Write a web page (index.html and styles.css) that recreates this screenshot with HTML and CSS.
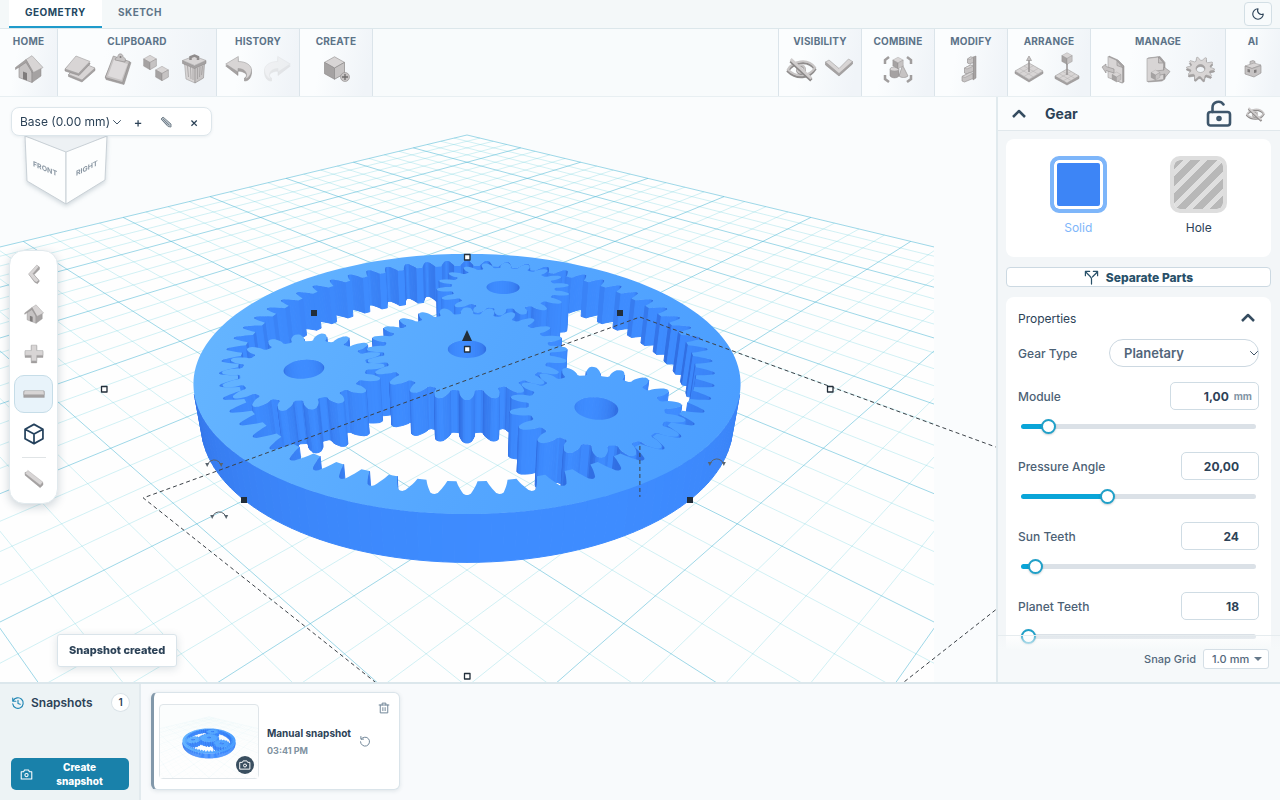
FILE: index.html
```html
<!DOCTYPE html>
<html lang="en">
<head>
<meta charset="utf-8">
<meta name="viewport" content="width=device-width, initial-scale=1">
<title>Gear – Geometry</title>
<link rel="stylesheet" href="styles.css">
</head>
<body>
<svg class="defs" aria-hidden="true">
  <symbol id="cube" viewBox="0 0 20 20">
    <path class="lt" d="M10 1 18 5.5 10 10 2 5.5Z"/><path class="dk" d="M2 5.5 10 10V19L2 14.5Z"/><path class="md" d="M18 5.5 10 10V19l8-4.5Z"/>
  </symbol>
  <symbol id="house" viewBox="0 0 32 32">
    <path class="md" d="M6 14 13 8l6 10v11.500L6 24.500Z"/><path class="dk" d="M19 18l9-4v9l-9 6.500Z"/>
    <path class="hole" d="M10 18.500l4 1.500v7.500l-4-1.500Z"/>
    <path class="lt" d="M13 6.500 19 2.700 30 14.500 19.500 20Z"/><path class="dk" d="M13 6.500 2.500 14.500v2L13 9.500l6.500 10.500.500-1.500Z"/>
  </symbol>
  <symbol id="eyeoff" viewBox="0 0 34 32">
    <path class="ring-d" d="M3 18.500c5-9 21-13 29-2-6 10-20 11-29 2Z"/><path class="ring-l" d="M3 16.500c5-9 21-13 29-2-6 10-20 11-29 2Z"/>
    <circle class="ring-d" cx="17" cy="17" r="4"/><circle class="ring-l" cx="17" cy="16" r="4"/>
    <path class="bar-d" d="M6 7.500 28 28"/><path class="bar-l" d="M6 5.500 28 26"/>
  </symbol>
  <symbol id="undo" viewBox="0 0 32 32">
    <path class="dk" d="M2.700 13 15 5.500v5c9 0 14 4 13.500 9.500-.5 5-3 8-7 8v-3c3-.5 4-6-6.500-7v4.500Z"/>
    <path class="lt" d="M2.700 11 15.300 3.500V8.500c8 0 13.500 4 13.200 9-.3 4-3 8-6.500 8.500 4-5.500-.5-10.500-7-10.500V19Z"/>
  </symbol>
  <symbol id="camera" viewBox="0 0 16 16"><path class="ln" d="M1.500 4.500h3l1-2h5l1 2h3v9h-13Z"/><circle class="ln" cx="8" cy="8.700" r="2"/></symbol>
</svg>

<header class="tabs">
  <nav class="tablist">
    <button class="tab active" type="button">GEOMETRY</button>
    <button class="tab" type="button">SKETCH</button>
  </nav>
  <button class="theme" type="button" aria-label="Dark theme"><svg viewBox="0 0 16 16"><path class="ln" d="M8 2a4.500 4.500 0 0 0 6 6 6 6 0 1 1-6-6Z"/></svg></button>
</header>

<section class="ribbon">
  <div class="group home"><h2>HOME</h2><div class="tools">
    <button type="button" aria-label="Home"><svg class="ic"><use href="#house"/></svg></button>
  </div></div>
  <div class="group"><h2>CLIPBOARD</h2><div class="tools">
    <button type="button" aria-label="Copy"><svg class="ic" viewBox="0 0 32 32"><path class="dk" d="M17 10 31 15.500v2L18 29 4.500 23.500v-2Z"/><path class="lt" d="M17 9 31 15 18 27 4.500 21.500Z"/><path class="dk" d="M12 5 26 10v1L15 22.500 1 18v-2Z"/><path class="lt" d="M12 3 26 8.500 14.500 20.500 1 16Z"/></svg></button>
    <button type="button" aria-label="Paste"><svg class="ic" viewBox="0 0 32 32"><path class="dk" d="M12 4 29 9.500 22 31.500 4 26.500 3.300 24Z"/><path class="md" d="M11.300 3 27.500 8.500 20.500 29.500 3.300 24.500Z"/><path class="pale" d="M12 6.500 25.500 11 19.500 27 6 23Z"/><path class="md" d="M13.500 5.500 16 3.500c0-4 5-3 5 0l2.500 2.500-.5 3-10-2Z"/><circle class="hole" cx="18.500" cy="4" r="1"/></svg></button>
    <button type="button" aria-label="Duplicate"><svg class="ic" viewBox="0 0 32 32"><use href="#cube" x="2" y="1" width="16" height="17"/><use href="#cube" x="14" y="12" width="16" height="17"/></svg></button>
    <button type="button" aria-label="Delete"><svg class="ic" viewBox="0 0 32 32"><path class="lt" d="M6.500 10 17 14v16L8 26Z"/><path class="md" d="M26.500 10 17 14v16l8.500-5Z"/><path class="rib" d="M9.500 13l1 11M12.500 14l.5 12M15 15v12M19.500 15v11M22 14l-.5 10M24.500 13l-1 9"/><path class="dk" d="M4.500 7.500 16.500 13 28 7.500v3L16.500 15.500 4.500 10.500Z"/><path class="lt" d="M4.500 7.500 16 3 28 7.500 16.500 12.500Z"/><path class="ring-d" d="M12.500 7V4l4-1.500L20 4v3"/></svg></button>
  </div></div>
  <div class="group"><h2>HISTORY</h2><div class="tools">
    <button type="button" aria-label="Undo"><svg class="ic"><use href="#undo"/></svg></button>
    <button type="button" aria-label="Redo" disabled><svg class="ic flip"><use href="#undo"/></svg></button>
  </div></div>
  <div class="group single"><h2>CREATE</h2><div class="tools">
    <button type="button" aria-label="Create"><svg class="ic" viewBox="0 0 32 32"><use href="#cube" x="2" y="2" width="25" height="26"/><circle class="md" cx="25" cy="24" r="4.500"/><path class="rib dark" d="M25 21v6M22 24h6"/></svg></button>
  </div></div>
  <div class="spacer"></div>
  <div class="group first"><h2>VISIBILITY</h2><div class="tools">
    <button type="button" aria-label="Hide"><svg class="ic"><use href="#eyeoff"/></svg></button>
    <button type="button" aria-label="More"><svg class="ic" viewBox="0 0 32 32"><path class="dk" d="M2.500 9v3L16 23 29.500 11V8.500L16 18Z"/><path class="lt" d="M2.500 9 6 7l10 8.500L25.500 6l4 2.500L16 20.500Z"/></svg></button>
  </div></div>
  <div class="group single"><h2>COMBINE</h2><div class="tools">
    <button type="button" aria-label="Combine"><svg class="ic" viewBox="0 0 32 32"><path class="bracket" d="M3 11V7l4-3M25 4l4 3v4M3 22v4l4 3M25 29l4-3v-4"/><path class="md" d="M20.500 12l5.500 11c-2 2-7 2-9 0Z"/><path class="dk" d="M8 16v7c2 2.500 7 2.500 9 0v-7Z"/><ellipse class="lt" cx="12.500" cy="16" rx="4.500" ry="2"/><use href="#cube" x="9.500" y="3.500" width="13" height="13"/></svg></button>
  </div></div>
  <div class="group single"><h2>MODIFY</h2><div class="tools">
    <button type="button" aria-label="Modify"><svg class="ic" viewBox="0 0 32 32"><path class="dk" d="M18 4l3-1v22l-3 2Z"/><path class="md" d="M12.500 6l3-2 3 .500v5l-4 1.500-2-1Z"/><path class="lt" d="M12.500 6l3-2 3 .500-3.500 2Z"/><path class="md" d="M9.500 15l6-3 3 1v5l-6.500 3-2.500-1Z"/><path class="lt" d="M9.500 15l6-3 3 1-6.500 3Z"/><path class="md" d="M7 23.500l8-4 3 1v5l-8.500 3.500-2.500-1Z"/><path class="lt" d="M7 23.500l8-4 3 1-8 4Z"/></svg></button>
  </div></div>
  <div class="group"><h2>ARRANGE</h2><div class="tools">
    <button type="button" aria-label="Move to plane"><svg class="ic" viewBox="0 0 32 32"><path class="dk" d="M1 18.500 15 27l14-8.500v2L15 29 1 20.500Z"/><path class="lt" d="M1 18 15 10l14 8-14 8.500Z"/><path class="rib thin" d="M5.500 20.500 19.500 12.500M10 23.500l14-8M5.500 15.500l14 8.500M10 13l14 8"/><path class="stem" d="M15 19V6"/><path class="md" d="M12.500 7.500 15 3l2.500 4.500Z"/></svg></button>
    <button type="button" aria-label="Drop"><svg class="ic" viewBox="0 0 32 32"><path class="dk" d="M3 23 15 30l12-7v2.500L15 32 3 25.500Z"/><path class="lt" d="M3 23 15 16l12 7-12 7Z"/><path class="rib thin" d="M7 25.500 19 18.500M11 28l12-7M7 20.500l12 7M11 18.500l12 7"/><path class="stem" d="M15 22V9"/><use href="#cube" x="8.500" y="-1" width="13" height="13"/></svg></button>
  </div></div>
  <div class="group manage"><h2>MANAGE</h2><div class="tools">
    <button type="button" aria-label="Import"><svg class="ic" viewBox="0 0 32 32"><path class="dk" d="M10 3 19 7l6 6v16l-2 1L9.500 24Z"/><path class="lt" d="M9 3.500 18 7.500l5.500 6V30L9 24.500Z"/><path class="md" d="M18 7.500v5l5.500 2Z"/><path class="md" d="M3 14l4-3v2.500l8 2.500v4l-8-2.500V20Z"/><use href="#cube" x="12" y="18" width="11" height="12"/></svg></button>
    <button type="button" aria-label="Export"><svg class="ic" viewBox="0 0 32 32"><path class="dk" d="M6 5 18 3.500l5 6V26l-3 2-14 1Z"/><path class="lt" d="M5 5.500 16.500 4l5 6V26.500L5 28.500Z"/><path class="md" d="M16.500 4v6h5Z"/><path class="md" d="M14 18l8-1v-3l6 4.500-5 6V21l-9 2Z"/><use href="#cube" x="8" y="16" width="11" height="12"/></svg></button>
    <button type="button" aria-label="Settings"><svg class="ic" viewBox="0 0 32 32"><g id="cog"></g></svg></button>
  </div></div>
  <div class="group ai"><h2>AI</h2><div class="tools">
    <button type="button" aria-label="Assistant"><svg class="ic" viewBox="0 0 32 32"><path class="md" d="M13 12V8.500l3-1 2 1V12"/><path class="lt" d="M8 13l9-3 7 2-9 3.500Z"/><path class="md" d="M8 13l7 2.500 9-3V20l-7 4-9-3Z"/><path class="hole" d="M10.500 16l2.500.500v3l-2.500-.5ZM17 17l2.500-.5v3l-2.500.500Z"/></svg></button>
  </div></div>
</section>

<main class="work">
  <section class="stage">
    <canvas class="scene" id="scene"></canvas>
    <svg class="viewcube" viewBox="0 0 90 74" role="img" aria-label="View cube">
      <path class="vc-top" d="M4 0H86L45.500 18Z"/>
      <path class="vc-face" d="M4 1 45 17V69L6 46Z"/><path class="vc-face" d="M86 1 45 17V69L84 45Z"/>
      <text transform="matrix(1 .42 0 1 12 31)">FRONT</text><text transform="matrix(1 -.5 0 1 55 41)">RIGHT</text>
    </svg>
    <div class="levelbar">
      <label class="pick"><span class="sr">Work plane</span><select><option>Base (0.00 mm)</option></select><svg viewBox="0 0 8 8"><path class="ln thin" d="M0.500 2.500 4 6 7.500 2.500"/></svg></label>
      <button type="button">+</button>
      <button type="button" aria-label="Rename"><svg viewBox="0 0 12 12"><path class="pencil" d="M1 3 3 1 11 8v3L8 10.500Z"/><path class="ln thin" d="M3 3l6 6M2 4l5 5"/></svg></button>
      <button type="button">×</button>
    </div>
    <div class="dock">
      <button type="button" aria-label="Back"><svg class="ic s" viewBox="0 0 32 32"><path class="dk" d="M21 4l3 2v3l-8 8 8 9-3 4-4-2L9 17Z"/><path class="lt" d="M20 3l3 2.500L14.500 15.500 23 25l-3 3-3-1L8 16Z"/></svg></button>
      <button type="button" aria-label="Home view"><svg class="ic s"><use href="#house" width="22" height="22"/></svg></button>
      <button type="button" aria-label="Zoom in"><svg class="ic s" viewBox="0 0 32 32"><path class="dk" d="M12 4h8v8h9v9h-9v8h-8v-8H3v-9h9Z"/><path class="lt" d="M12 3h8v8h9v7h-9v8h-8v-8H3v-7h9Z"/></svg></button>
      <button class="on" type="button" aria-label="Zoom out"><svg class="ic s" viewBox="0 0 32 32"><path class="dk" d="M1 12h30v9H1Z"/><path class="lt" d="M2 11h28l1 6H1Z"/></svg></button>
      <button type="button" aria-label="Projection"><svg class="ic s" viewBox="0 0 32 32"><path class="navy" d="M16 2 29 9v14L16 30 3 23V9ZM3 9 16 16 29 9M16 16V30"/></svg></button>
      <hr>
      <button type="button" aria-label="Measure"><svg class="ic s" viewBox="0 0 32 32"><path class="dk" d="M3 7.500 29 23v3l-4 4L3 12Z"/><path class="lt" d="M7 5 29 22l-4 4.500L3 9.500Z"/></svg></button>
    </div>
    <div class="toast" role="status">Snapshot created</div>
  </section>

  <aside class="panel">
    <header class="panel-head">
      <button type="button" aria-label="Collapse"><svg class="chev" viewBox="0 0 16 16"><path d="M2 11 8 5l6 6"/></svg></button>
      <h1>Gear</h1>
      <button type="button" aria-label="Lock"><svg class="lock" viewBox="0 0 26 28"><rect x="2" y="12" width="22" height="13.500" rx="2.500"/><path d="M6.500 12V8a6 6 0 0 1 11-3.500"/><circle cx="13" cy="18.500" r="1.500"/></svg></button>
      <button type="button" aria-label="Hide part"><svg class="ic eye"><use href="#eyeoff"/></svg></button>
    </header>
    <div class="panel-body">
      <div class="card kinds">
        <button class="kind active" type="button"><span class="swatch solid"></span>Solid</button>
        <button class="kind" type="button"><span class="swatch hatch"></span>Hole</button>
      </div>
      <button class="separate" type="button"><svg viewBox="0 0 16 16"><path class="ln" d="M8 15V9.500C8 7 3 4 2 2M9 7.500C10 6 13 4 14 2M1.500 6V1.500H6M10 1.500h4.500V6"/></svg>Separate Parts</button>
      <div class="card props">
        <button class="props-head" type="button">Properties<svg class="chev" viewBox="0 0 16 16"><path d="M2 11 8 5l6 6"/></svg></button>
        <div class="row type"><label for="gtype">Gear Type</label><span class="pill"><select id="gtype"><option>Planetary</option></select><svg viewBox="0 0 8 8"><path class="ln thin" d="M0.500 2.500 4 6 7.500 2.500"/></svg></span></div>
        <div class="field"><div class="row"><label for="module">Module</label><span class="box unit"><input id="module" value="1,00"><span>mm</span></span></div>
          <input class="slider" type="range" aria-label="Module" min="0" max="100" value="9" style="--fill:27px"></div>
        <div class="field"><div class="row"><label for="angle">Pressure Angle</label><span class="box"><input id="angle" value="20,00"></span></div>
          <input class="slider" type="range" aria-label="Pressure Angle" min="0" max="100" value="36" style="--fill:86px"></div>
        <div class="field"><div class="row"><label for="sun">Sun Teeth</label><span class="box"><input id="sun" value="24"></span></div>
          <input class="slider" type="range" aria-label="Sun Teeth" min="0" max="100" value="3" style="--fill:14px"></div>
        <div class="field"><div class="row"><label for="planet">Planet Teeth</label><span class="box"><input id="planet" value="18"></span></div>
          <input class="slider" type="range" aria-label="Planet Teeth" min="0" max="100" value="0" style="--fill:7px"></div>
      </div>
    </div>
    <footer class="snap"><label for="snapgrid">Snap Grid</label><span class="snapbox"><select id="snapgrid"><option>1.0 mm</option></select><svg viewBox="0 0 8 8"><path d="M0 2h8L4 6Z"/></svg></span></footer>
  </aside>
</main>

<section class="history">
  <div class="hist-side">
    <div class="hist-title"><svg viewBox="0 0 16 16"><path class="ln" d="M2.500 5.500A6 6 0 1 1 2 9M2 2.500v3.500h3.500M8 5v3.500l2.500 1"/></svg><h2>Snapshots</h2><span class="count">1</span></div>
    <button class="create" type="button"><svg><use href="#camera"/></svg><span>Create snapshot</span></button>
  </div>
  <div class="hist-list">
    <article class="shot">
      <div class="thumb"><canvas id="thumb"></canvas><span class="cam"><svg><use href="#camera"/></svg></span></div>
      <div class="shot-text"><h3>Manual snapshot</h3><time>03:41 PM</time></div>
      <button class="restore" type="button" aria-label="Restore"><svg viewBox="0 0 16 16"><path class="ln" d="M3 5.500A6 6 0 1 1 2 9M2.500 2v3.500H6"/></svg></button>
      <button class="remove" type="button" aria-label="Delete snapshot"><svg viewBox="0 0 16 16"><path class="ln" d="M1.500 4h13M5.500 4V1.500h5V4M3 4v10.500h10V4M6.500 7.500v4M9.500 7.500v4"/></svg></button>
    </article>
  </div>
</section>
<script src="scene.js"></script>
</body>
</html>
```
FILE: styles.css
```css
* { box-sizing: border-box; }
html, body { height: 100%; }
body {
  margin: 0; display: flex; flex-direction: column; overflow: hidden;
  font-family: Inter, "Liberation Sans", sans-serif; font-size: 12px;
  color: #2c4257; background: #fafcfd;
}
h1, h2, h3 { margin: 0; }
button, select, input { font: inherit; color: inherit; margin: 0; }
button { padding: 0; border: 0; background: none; }
select { appearance: none; border: 0; background: none; outline: 0; }
.defs { position: absolute; width: 0; height: 0; }
.sr { position: absolute; width: 1px; height: 1px; overflow: hidden; clip-path: inset(50%); }
.ln { fill: none; stroke: currentColor; stroke-width: 1.3; stroke-linecap: round; stroke-linejoin: round; }
.ln.thin { stroke-width: .9; }

/* shaded metal icons */
.ic { display: block; width: 32px; height: 32px; overflow: visible; }
.ic.s { width: 22px; height: 22px; }
.lt { fill: #d8d5d5; stroke: #a09d9d; stroke-width: .6; }
.md { fill: #c6c3c3; stroke: #8f8c8c; stroke-width: .6; }
.dk { fill: #a5a2a2; stroke: #8a8787; stroke-width: .5; }
.pale { fill: #dedbdc; }
.hole { fill: #7f7c7c; }
.rib { fill: none; stroke: #9b9898; stroke-width: .7; }
.rib.thin { stroke: #b3b0b0; stroke-width: .5; }
.rib.dark { stroke: #6f6d6d; stroke-width: 1.3; }
.stem { stroke: #949191; stroke-width: 1.5; }
.ring-d { fill: none; stroke: #8f8c8c; stroke-width: 2.5; }
.ring-l { fill: none; stroke: #c8c5c5; stroke-width: 2.2; }
.bar-d { stroke: #8a8787; stroke-width: 3.5; }
.bar-l { stroke: #d0cdcd; stroke-width: 3; }
.bracket { fill: none; stroke: #a09d9d; stroke-width: 2.5; }
.flip { transform: scaleX(-1); }

.tabs { display: flex; justify-content: space-between; height: 29px; padding: 0 8px 0 9px; background: #f4f8f9; border-bottom: 1px solid #dce7eb; flex: none; }
.tablist { display: flex; }
.tab { padding: 0 16px 2px; height: 28px; line-height: 24px; font-size: 10px; font-weight: 700; letter-spacing: .05em; color: #5d7488; border-bottom: 2px solid transparent; }
.tab.active { color: #23475f; background: #fff; border-bottom-color: #209bcb; }
.theme { width: 28px; height: 24px; margin-top: 2px; border: 1px solid #d3dfe5; border-radius: 4px; display: grid; place-items: center; background: #f8fbfc; }
.theme svg { width: 14px; height: 14px; }

.ribbon { display: flex; height: 68px; flex: none; background: #f8fbfc; border-bottom: 1px solid #e8eff2; }
.group { padding: 5px 3px 0; border-right: 1px solid #dbe4ea; background: linear-gradient(100deg, #fbfdfe 30%, #f0f4f8 90%); }
.group h2 { font-size: 10px; line-height: 14px; font-weight: 700; text-align: center; color: #5c7388; letter-spacing: .02em; }
.group.first { border-left: 1px solid #dbe4ea; }
.group.home { width: 58px; }
.group.single { width: 73px; }
.group.manage { padding-inline: 5px; }
.group.manage .tools { gap: 5px; }
.group.ai { width: 54px; border-right: 0; }
.spacer { flex: 1; }
.tools { display: flex; justify-content: center; margin-top: 5px; }
.tools button { width: 38px; display: grid; place-items: center; }
.tools button:disabled { opacity: .2; }

.work { flex: 1; display: flex; min-height: 0; }
.stage { position: relative; flex: 1; min-width: 0; overflow: hidden; background: #fafcfd; }
.scene { position: absolute; inset: 0; width: 100%; height: 100%; }
.levelbar { position: absolute; left: 11px; top: 10px; display: flex; align-items: center; height: 29px; padding: 0 3px 0 8px; background: #fff; border: 1px solid #dde6eb; border-radius: 8px; box-shadow: 0 1px 3px #20405514; }
.pick { display: flex; align-items: center; }
.pick svg { width: 8px; height: 8px; margin: 0 3px 0 2px; }
.levelbar button { width: 28px; display: grid; place-items: center; font-size: 13px; font-weight: 500; }
.levelbar button svg { width: 12px; height: 12px; color: #6f7e8b; }
.pencil { fill: #b8c0c7; stroke: #7b8892; }
.viewcube { position: absolute; left: 21px; top: 38px; width: 90px; height: 74px; filter: drop-shadow(0 2px 2px #20405530); }
.vc-face { fill: #fdfefe; stroke: #c8d0d6; }
.vc-top { fill: #edf1f4; }
.viewcube text { font-size: 7px; font-weight: 700; fill: #8a97a3; }
.dock { position: absolute; left: 9px; top: 153px; width: 49px; padding: 4px 4px 6px; display: flex; flex-direction: column; align-items: center; gap: 2px; background: #fff; border: 1px solid #e1e9ed; border-radius: 15px; box-shadow: 0 3px 10px #20405538; }
.dock button { width: 39px; height: 38px; display: grid; place-items: center; border: 1px solid transparent; border-radius: 10px; }
.dock .on { background: #e8f3fa; border-color: #c6dde8; }
.dock hr { width: 24px; margin: 2px 0 -1px; border: 0; border-top: 1px solid #e0e4e6; }
.navy { fill: none; stroke: #24415c; stroke-width: 2.500; stroke-linejoin: round; }
.toast { position: absolute; left: 57px; bottom: 15px; padding: 8px 11px; line-height: 15px; font-size: 11px; font-weight: 800; background: #fff; border: 1px solid #dae4ea; border-radius: 3px; box-shadow: 0 2px 8px #20405526; }

.panel { position: relative; width: 284px; flex: none; display: flex; flex-direction: column; background: #f3f6f8; border-left: 2px solid #e1eaee; overflow: hidden; }
.panel-head { display: flex; align-items: center; height: 34px; padding: 0 15px 0 13px; background: #fafcfd; border-bottom: 1px solid #e1e8ec; flex: none; }
.panel-head h1 { flex: 1; margin-left: 18px; font-size: 14px; font-weight: 700; }
.chev { display: block; width: 16px; height: 16px; }
.chev path { fill: none; stroke: #354c60; stroke-width: 2.5; stroke-linejoin: round; }
.lock { display: block; width: 26px; height: 28px; fill: none; stroke: #3e566b; stroke-width: 2.600; stroke-linecap: round; }
.ic.eye { width: 20px; height: 20px; margin-left: 13px; }
.panel-body { padding: 8px 9px 0 8px; display: flex; flex-direction: column; gap: 10px; }
.card { background: #fff; border-radius: 8px; }
.kinds { display: flex; justify-content: space-around; height: 118px; padding: 17px 12px; }
.kind { display: flex; flex-direction: column; align-items: center; gap: 7px; height: 80px; }
.kind.active { color: #7eb6fa; }
.swatch { width: 57px; height: 57px; border-radius: 10px; }
.solid { background: #3d85f6; border: 4px solid #7eb6fa; box-shadow: inset 0 0 0 3px #fff; border-radius: 9px; }
.hatch { border: 4px solid #dedede; background: repeating-linear-gradient(135deg, #b8b8b8 0 7px, #dfdfdf 7px 12px) padding-box; }
.separate { display: flex; align-items: center; justify-content: center; gap: 7px; height: 20px; background: #fff; border: 1px solid #ccd9e2; border-radius: 4px; font-weight: 800; color: #285069; }
.separate svg { width: 15px; height: 15px; }
.props { padding: 8px 12px; }
.props-head { display: flex; justify-content: space-between; align-items: center; width: 100%; height: 26px; padding-right: 3px; }
.row { display: flex; justify-content: space-between; align-items: center; height: 28px; }
.row label { font-weight: 500; color: #4c6175; }
.row.type { margin: 8px 0 15px; }
.pill { position: relative; width: 150px; }
.pill select { width: 100%; height: 28px; padding: 0 14px; border: 1px solid #ccd8e1; border-radius: 14px; font-size: 13px; font-weight: 600; color: #52657a; }
.pill svg { position: absolute; right: 1px; top: 10px; width: 8px; height: 8px; }
.field { height: 70px; }
.box { display: flex; align-items: center; width: 78px; height: 28px; padding: 0 19px 0 6px; border: 1px solid #cfdce4; border-radius: 5px; }
.box.unit { width: 89px; padding-right: 6px; gap: 5px; }
.box input { width: 100%; min-width: 0; padding: 0; border: 0; background: none; text-align: right; font-weight: 700; color: #2d4257; }
.box span { font-size: 10px; font-weight: 700; color: #8294a5; }
.slider { appearance: none; display: block; width: 235px; height: 15px; margin: 9px 3px 0; background: none; }
.slider::-webkit-slider-runnable-track { height: 5px; border-radius: 3px; background: linear-gradient(to right, #0aa5d8 var(--fill), #dbe1e7 var(--fill)); }
.slider::-webkit-slider-thumb { appearance: none; width: 15px; height: 15px; margin-top: -5px; border: 2px solid #20a0c8; border-radius: 50%; background: #fff; box-shadow: 0 1px 2px #20405540; }
.snap { position: absolute; left: 0; right: 0; bottom: 0; display: flex; justify-content: flex-end; align-items: center; gap: 7px; height: 47px; padding: 0 11px 0 0; font-size: 11px; font-weight: 500; color: #53687c; background: linear-gradient(#f8fafb40, #f6f9fa 14px); border-top: 1px solid #e6ecef; }
.snapbox { position: relative; }
.snapbox select { width: 66px; height: 20px; padding: 0 8px; background: #fff; border: 1px solid #d5dfe6; border-radius: 3px; }
.snapbox svg { position: absolute; right: 7px; top: 6px; width: 8px; height: 8px; fill: #66798a; }

.history { display: flex; height: 118px; flex: none; border-top: 2px solid #dce7ec; background: #f8fafc; }
.hist-side { width: 141px; padding: 10px 10px 10px 11px; display: flex; flex-direction: column; justify-content: space-between; background: #edf3f5; border-right: 2px solid #e2eaee; }
.hist-title { display: flex; align-items: center; gap: 6px; }
.hist-title > svg { width: 14px; height: 14px; color: #2186b4; }
.hist-title h2 { flex: 1; font-size: 12px; font-weight: 600; }
.count { width: 17px; height: 17px; line-height: 17px; text-align: center; font-size: 10px; font-weight: 600; background: #fff; border-radius: 50%; box-shadow: 0 0 0 1px #dae3e8; }
.create { display: flex; align-items: center; height: 32px; padding: 0 9px; border-radius: 5px; background: #1981aa; color: #fff; font-size: 10px; line-height: 14px; font-weight: 800; }
.create svg { width: 13px; height: 13px; }
.create span { flex: 1; padding: 0 11px 0 17px; }
.hist-list { flex: 1; padding: 8px 10px; }
.shot { position: relative; display: flex; align-items: center; width: 249px; height: 98px; padding: 0 6px 0 5px; background: #fff; border: 1px solid #dae4ea; border-left: 3px solid #8298aa; border-radius: 6px; box-shadow: 0 1px 4px #2040551f; }
.thumb { position: relative; width: 100px; height: 75px; border: 1px solid #dfe5e9; border-radius: 4px; background: #fbfdfd; }
.thumb canvas { display: block; width: 98px; height: 73px; }
.cam { position: absolute; right: 4px; bottom: 4px; width: 18px; height: 18px; display: grid; place-items: center; border-radius: 50%; background: #3a4f60; color: #fff; }
.cam svg { width: 12px; height: 12px; }
.shot-text { margin: 0 8px; }
.shot-text h3 { font-size: 10px; line-height: 16px; font-weight: 700; white-space: nowrap; }
.shot-text time { display: block; margin-top: 2px; font-size: 9px; line-height: 15px; font-weight: 700; color: #8092a1; }
.restore svg, .remove svg { display: block; width: 12px; height: 12px; color: #6f8496; }
.remove { position: absolute; right: 9px; top: 9px; }
```
FILE: scene.js
```js
// Planetary gear set: module 1, sun 24 teeth, planets 18, ring 60.
const DEG = Math.PI / 180;
const H = 6, R = 34.25, PITCH = 29.93 * DEG, DIST = 113.4;
const SN = Math.sin(PITCH), CS = Math.cos(PITCH);

const inv = a => Math.tan(a) - a;
function gearOutline(z, cx, cy, phase, add, ded, internal) {
  const r = z / 2, rb = r * Math.cos(20 * DEG), half = Math.PI / (2 * z) + inv(20 * DEG);
  const width = p => half - (p > rb ? inv(Math.acos(rb / p)) : 0);
  const root = r - ded, tip = r + add, side = [];
  if (internal) side.push([root, width(root)]);
  else side.push([root, Math.min(width(root) * 1.25, Math.PI / z * 0.85)], [root + 0.25, width(root)]);
  for (let i = 1; i <= 5; i++) {
    const p = root + 0.25 + (tip - 0.2 - root - 0.25) * i / 5;
    side.push([p, width(p)]);
  }
  const wt = width(tip);
  side.push([tip - 0.07, wt * 0.8], [tip, wt * 0.4]);
  const pts = [];
  for (let k = 0; k < z; k++) {
    const a = phase + k * 2 * Math.PI / z;
    side.forEach(([p, w]) => pts.push([cx + p * Math.cos(a - w), cy + p * Math.sin(a - w)]));
    [...side].reverse().forEach(([p, w]) => pts.push([cx + p * Math.cos(a + w), cy + p * Math.sin(a + w)]));
  }
  return pts;
}
function circle(cx, cy, r, n) {
  return Array.from({ length: n }, (_, i) => [cx + r * Math.cos(i * 2 * Math.PI / n), cy + r * Math.sin(i * 2 * Math.PI / n)]);
}
const parts = [
  { outer: circle(0, 0, R, 180), inner: gearOutline(60, 0, 0, 0, 1.25, 1, true) },
  { outer: gearOutline(24, 0, 0, 0, 1, 1.25), inner: circle(0, 0, 2.5, 40) }
];
[75, 195, 315].forEach(d => {
  const x = 21 * Math.cos(d * DEG), y = 21 * Math.sin(d * DEG);
  parts.push({ outer: gearOutline(18, x, y, (d + 10) * DEG, 1, 1.25), inner: circle(x, y, 2.5, 40) });
});

function render(ctx, cam, full) {
  const depth = (Y, Z) => DIST + Y * CS - Z * SN;
  const P = (X, Y, Z) => {
    const d = depth(Y, Z);
    return [cam.cx + cam.f * X / d, cam.cy - cam.f * (Y * SN + Z * CS) / d];
  };
  const poly = pts => pts.forEach((p, i) => i ? ctx.lineTo(p[0], p[1]) : ctx.moveTo(p[0], p[1]));
  const G = (u, v) => [(u - v) * Math.SQRT1_2, (u + v) * Math.SQRT1_2];
  const clip = (a, b) => {
    const da = depth(a[1], 0) - 5, db = depth(b[1], 0) - 5;
    if (db >= 0) return b;
    const t = da / (da - db);
    return [a[0] + (b[0] - a[0]) * t, a[1] + (b[1] - a[1]) * t];
  };

  // ground plane and grid
  ctx.save();
  ctx.beginPath(); ctx.rect(0, 0, cam.limit, 4000); ctx.clip();
  const L = G(-100, 100), Q = G(100, -100), B = G(100, 100), N = G(-100, -100);
  ctx.fillStyle = '#fefefe'; ctx.beginPath();
  poly([B, L, clip(L, N), clip(Q, N), Q].map(p => P(p[0], p[1], 0))); ctx.fill();
  for (const major of [false, true]) {
    ctx.beginPath();
    for (let k = -100; k <= 100; k += 5) {
      if ((k % 20 === 0) !== major) continue;
      for (const [a, b] of [[G(100, k), G(-100, k)], [G(k, 100), G(k, -100)]]) {
        if (depth(a[1], 0) < 5) continue;
        const e = clip(a, b);
        poly([P(a[0], a[1], 0), P(e[0], e[1], 0)]);
      }
    }
    ctx.lineWidth = full ? 0.7 : 0.06;
    ctx.strokeStyle = major ? 'rgba(70,180,210,.75)' : 'rgba(110,210,222,.45)';
    ctx.stroke();
  }
  ctx.restore();

  // side walls, far to near
  const quads = [];
  const walls = (pts, sign) => pts.forEach((a, i) => {
    const b = pts[(i + 1) % pts.length];
    const len = Math.hypot(b[0] - a[0], b[1] - a[1]) || 1;
    const nx = sign * (b[1] - a[1]) / len, ny = -sign * (b[0] - a[0]) / len;
    const my = (a[1] + b[1]) / 2, mx = (a[0] + b[0]) / 2;
    if (nx * -mx + ny * (-DIST * CS - my) <= 0) return;
    const face = Math.max(0, 0.25 * nx - 0.97 * ny);
    quads.push({ a, b, y: my, k: 0.79 + 0.21 * Math.pow(face, 0.7) });
  });
  parts.forEach(p => { walls(p.outer, 1); walls(p.inner, -1); });
  quads.sort((p, q) => q.y - p.y);
  quads.forEach(({ a, b, k }) => {
    ctx.fillStyle = ctx.strokeStyle = `rgb(${Math.round(62 * k)},${Math.round(140 * k)},${Math.round(255 * Math.sqrt(k))})`;
    ctx.lineWidth = full ? 1 : 0.2;
    ctx.lineJoin = 'round';
    ctx.beginPath();
    poly([P(a[0], a[1], H), P(b[0], b[1], H), P(b[0], b[1], 0), P(a[0], a[1], 0)]);
    ctx.closePath(); ctx.fill(); ctx.stroke();
  });

  // top faces
  const tl = P(-R, R * 0.4, H), br = P(R * 0.7, -R, H);
  const g = ctx.createLinearGradient(tl[0], tl[1], br[0], br[1]);
  g.addColorStop(0, '#64b4ff'); g.addColorStop(0.5, '#55a7ff'); g.addColorStop(1, '#4a9dff');
  ctx.fillStyle = g;
  parts.forEach(p => {
    ctx.beginPath();
    poly(p.outer.map(q => P(q[0], q[1], H))); ctx.closePath();
    poly(p.inner.map(q => P(q[0], q[1], H))); ctx.closePath();
    ctx.fill('evenodd');
  });
  return P;
}

function overlay(ctx, cam, P) {
  const s = cam.f / 850, S = (x, y) => [cam.cx + x * s, cam.cy + y * s];
  const line = (...pts) => { ctx.beginPath(); pts.forEach((p, i) => ctx[i ? 'lineTo' : 'moveTo'](...S(...p))); ctx.stroke(); };
  ctx.strokeStyle = '#3c4248'; ctx.lineWidth = 1; ctx.setLineDash([4, 3]);
  line([-91, 294], [-324, 109], [173, -72], [529, 58]);
  line([529, 221], [435, 295]);
  line([173, 57], [173, 108]);
  ctx.setLineDash([]);
  const box = (p, open) => {
    ctx.fillStyle = open ? '#fff' : '#222e3a';
    ctx.fillRect(Math.round(p[0]) - 3, Math.round(p[1]) - 3, 6, 6);
    if (open) { ctx.strokeStyle = '#222e3a'; ctx.lineWidth = 1.3; ctx.strokeRect(Math.round(p[0]) - 2.5, Math.round(p[1]) - 2.5, 5.5, 5.5); }
  };
  const d = R * Math.SQRT2;
  [[0, d], [0, -d], [d, 0], [-d, 0]].forEach(q => box(P(q[0], q[1], 0), true));
  [[1, 1], [1, -1], [-1, 1], [-1, -1]].forEach(q => box(P(q[0] * d / 2, q[1] * d / 2, 0), false));
  const c = P(0, 0, H);
  box(c, true);
  ctx.fillStyle = '#222e3a'; ctx.beginPath();
  ctx.moveTo(c[0], c[1] - 19); ctx.lineTo(c[0] + 5, c[1] - 8); ctx.lineTo(c[0] - 5, c[1] - 8); ctx.fill();
  ctx.strokeStyle = ctx.fillStyle = '#59636c'; ctx.lineWidth = 1;
  [[-253, 74], [-248, 126], [250, 73]].forEach(q => {
    const [x, y] = S(...q);
    ctx.beginPath(); ctx.arc(x, y + 4, 7, Math.PI * 1.1, Math.PI * 1.9); ctx.stroke();
    [-7, 7].forEach(o => { ctx.beginPath(); ctx.moveTo(x + o, y + 4); ctx.lineTo(x + o - 2, y); ctx.lineTo(x + o + 2, y); ctx.fill(); });
  });
}

function fit(canvas) {
  const r = canvas.getBoundingClientRect(), k = window.devicePixelRatio || 1;
  canvas.width = Math.round(r.width * k); canvas.height = Math.round(r.height * k);
  const ctx = canvas.getContext('2d'); ctx.scale(k, k);
  return [ctx, r.width, r.height];
}
function paint() {
  const [ctx, w, h] = fit(document.getElementById('scene'));
  const limit = w - 62;
  const cam = { cx: limit / 2, cy: h / 2 - 0.5, f: h * 1.452, limit };
  overlay(ctx, cam, render(ctx, cam, true));
  const [tc, tw, th] = fit(document.getElementById('thumb'));
  render(tc, { cx: tw / 2, cy: th / 2, f: th * 1.13, limit: tw }, false);
}
paint();
window.addEventListener('resize', paint);

// settings cog
const ns = 'http://www.w3.org/2000/svg';
[['dk', 2], ['lt', 0]].forEach(([cls, dy]) => {
  let d = '';
  for (let i = 0; i < 40; i++) {
    const r = i % 4 < 2 ? 14 : 10, a = (i + (i % 4 === 1 ? -0.2 : i % 4 === 0 ? 0.2 : 0)) * Math.PI / 20;
    d += `${i ? 'L' : 'M'}${(15.5 + r * Math.cos(a)).toFixed(1)} ${(15.5 + dy + r * 0.82 * Math.sin(a)).toFixed(1)}`;
  }
  const p = document.createElementNS(ns, 'path');
  p.setAttribute('class', cls);
  p.setAttribute('fill-rule', 'evenodd');
  p.setAttribute('d', d + `ZM11 ${15.5 + dy}a4.5 4 0 1 0 9 0a4.5 4 0 1 0-9 0Z`);
  document.getElementById('cog').append(p);
});
```
